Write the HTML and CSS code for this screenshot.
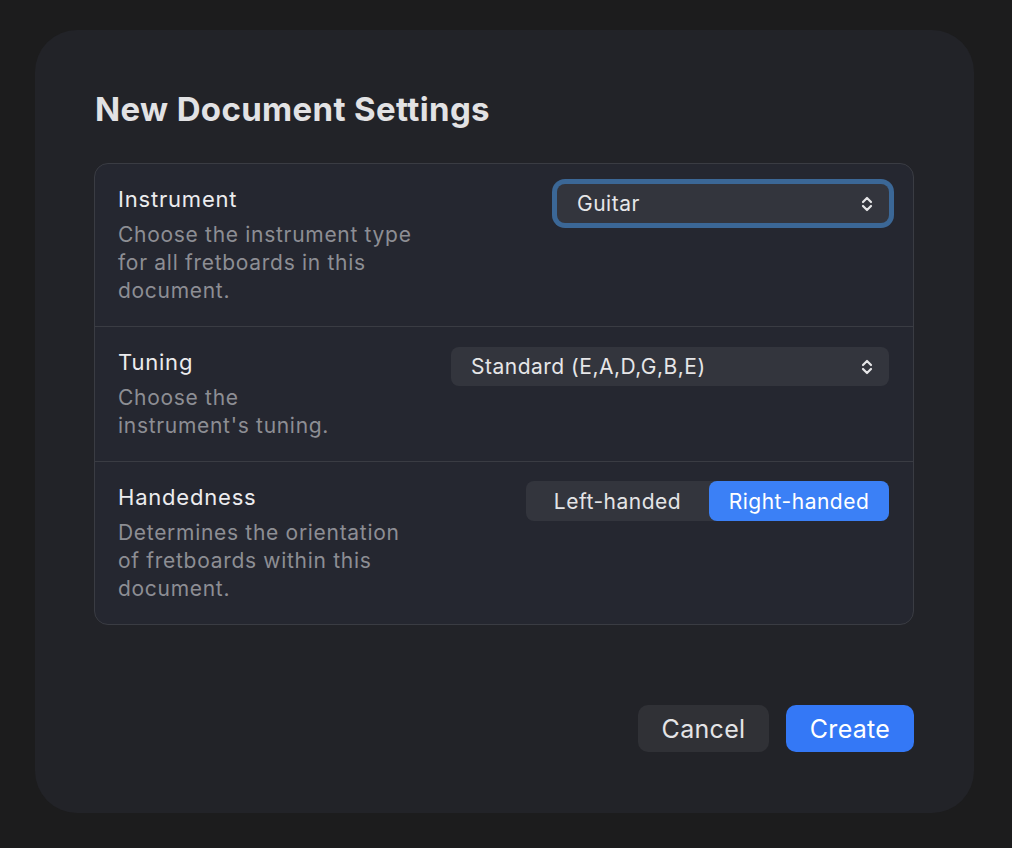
FILE: index.html
```html
<!DOCTYPE html>
<html lang="en">

<head>
    <meta charset="UTF-8">
    <meta name="viewport" content="width=device-width, initial-scale=1.0">
    <title>New Document Settings</title>
    <link rel="stylesheet" href="styles.css">
</head>

<body>
    <div class="dialog">
        <h1 class="title">New Document Settings</h1>

        <!-- settings group -->
        <div class="group">
            <div class="row">
                <div class="info">
                    <p class="label">Instrument</p>
                    <p class="desc">Choose the instrument type for all fretboards in this document.</p>
                </div>
                <div class="ring">
                    <div class="select select-instrument">
                        <span>Guitar</span>
                        <svg class="chevrons" width="12" height="18" viewBox="0 0 12 18">
                            <path d="M2 7 L6 3 L10 7" />
                            <path d="M2 11 L6 15 L10 11" />
                        </svg>
                    </div>
                </div>
            </div>

            <div class="row">
                <div class="info">
                    <p class="label">Tuning</p>
                    <p class="desc desc-narrow">Choose the instrument's tuning.</p>
                </div>
                <div class="select select-tuning">
                    <span>Standard (E,A,D,G,B,E)</span>
                    <svg class="chevrons" width="12" height="18" viewBox="0 0 12 18">
                        <path d="M2 7 L6 3 L10 7" />
                        <path d="M2 11 L6 15 L10 11" />
                    </svg>
                </div>
            </div>

            <div class="row">
                <div class="info">
                    <p class="label">Handedness</p>
                    <p class="desc">Determines the orientation of fretboards within this document.</p>
                </div>
                <div class="segmented">
                    <div class="segment">Left-handed</div>
                    <div class="segment active">Right-handed</div>
                </div>
            </div>
        </div>

        <!-- footer buttons -->
        <div class="actions">
            <button class="btn btn-cancel">Cancel</button>
            <button class="btn btn-create">Create</button>
        </div>
    </div>
</body>

</html>
```

FILE: styles.css
```css
body {
    margin: 0;
    padding: 30px 38px 34px 35px;
    background: #1c1c1d;
    font-family: Inter, "Noto Sans", sans-serif;
}

.dialog {
    width: 939px;
    box-sizing: border-box;
    padding: 59px 60px 61px 59px;
    background: #222328;
    border-radius: 42px;
}

.title {
    margin: 0 0 34px 1px;
    font-size: 33px;
    line-height: 40px;
    font-weight: 700;
    color: #e2e2e4;
    letter-spacing: 0.35px;
}

.group {
    background: #252730;
    border: 1px solid #3a3c43;
    border-radius: 14px;
}

.row {
    display: flex;
    justify-content: space-between;
    align-items: flex-start;
    padding: 20px 24px 21px 23px;
    border-bottom: 1px solid #3a3c43;
}

.row:last-child {
    border-bottom: none;
}

.info {
    padding-top: 1px;
}

p {
    margin: 0;
}

.label {
    font-size: 22px;
    line-height: 28px;
    letter-spacing: 0.8px;
    color: #ececee;
    margin-bottom: 8px;
}

.desc {
    font-size: 21px;
    line-height: 28px;
    letter-spacing: 0.7px;
    color: #8d8e94;
    width: 296px;
}

.desc-narrow {
    width: 240px;
}

.ring {
    padding: 5px;
    margin: -5px -5px 0 0;
    border-radius: 13px;
    background: #3b6796;
}

.select {
    display: flex;
    align-items: center;
    justify-content: space-between;
    box-sizing: border-box;
    height: 39px;
    padding: 0 16px 0 20px;
    background: #33353d;
    border-radius: 8px;
    color: #e6e6e8;
    font-size: 21px;
    letter-spacing: 0.5px;
}

.select-instrument {
    width: 332px;
}

.select-tuning {
    width: 438px;
}

.chevrons path {
    fill: none;
    stroke: #e6e6e8;
    stroke-width: 2.2;
    stroke-linecap: round;
    stroke-linejoin: round;
}

.segmented {
    display: flex;
    margin-top: -1px;
    height: 40px;
    width: 363px;
    background: #33353d;
    border-radius: 8px;
}

.segment {
    flex: 1;
    display: flex;
    align-items: center;
    justify-content: center;
    font-size: 21px;
    letter-spacing: 0.5px;
    color: #e4e4e6;
    border-radius: 8px;
}

.segment.active {
    flex: 0 0 180px;
    background: #3b80f6;
    color: #fff;
}

.actions {
    display: flex;
    justify-content: flex-end;
    gap: 17px;
    margin-top: 80px;
}

.btn {
    height: 47px;
    border: none;
    border-radius: 10px;
    font-family: Inter, "Noto Sans", sans-serif;
    font-size: 25px;
    letter-spacing: 0.3px;
    cursor: pointer;
}

.btn-cancel {
    width: 131px;
    background: #303136;
    color: #e4e4e6;
}

.btn-create {
    width: 128px;
    background: #3478f6;
    color: #fff;
}
```
